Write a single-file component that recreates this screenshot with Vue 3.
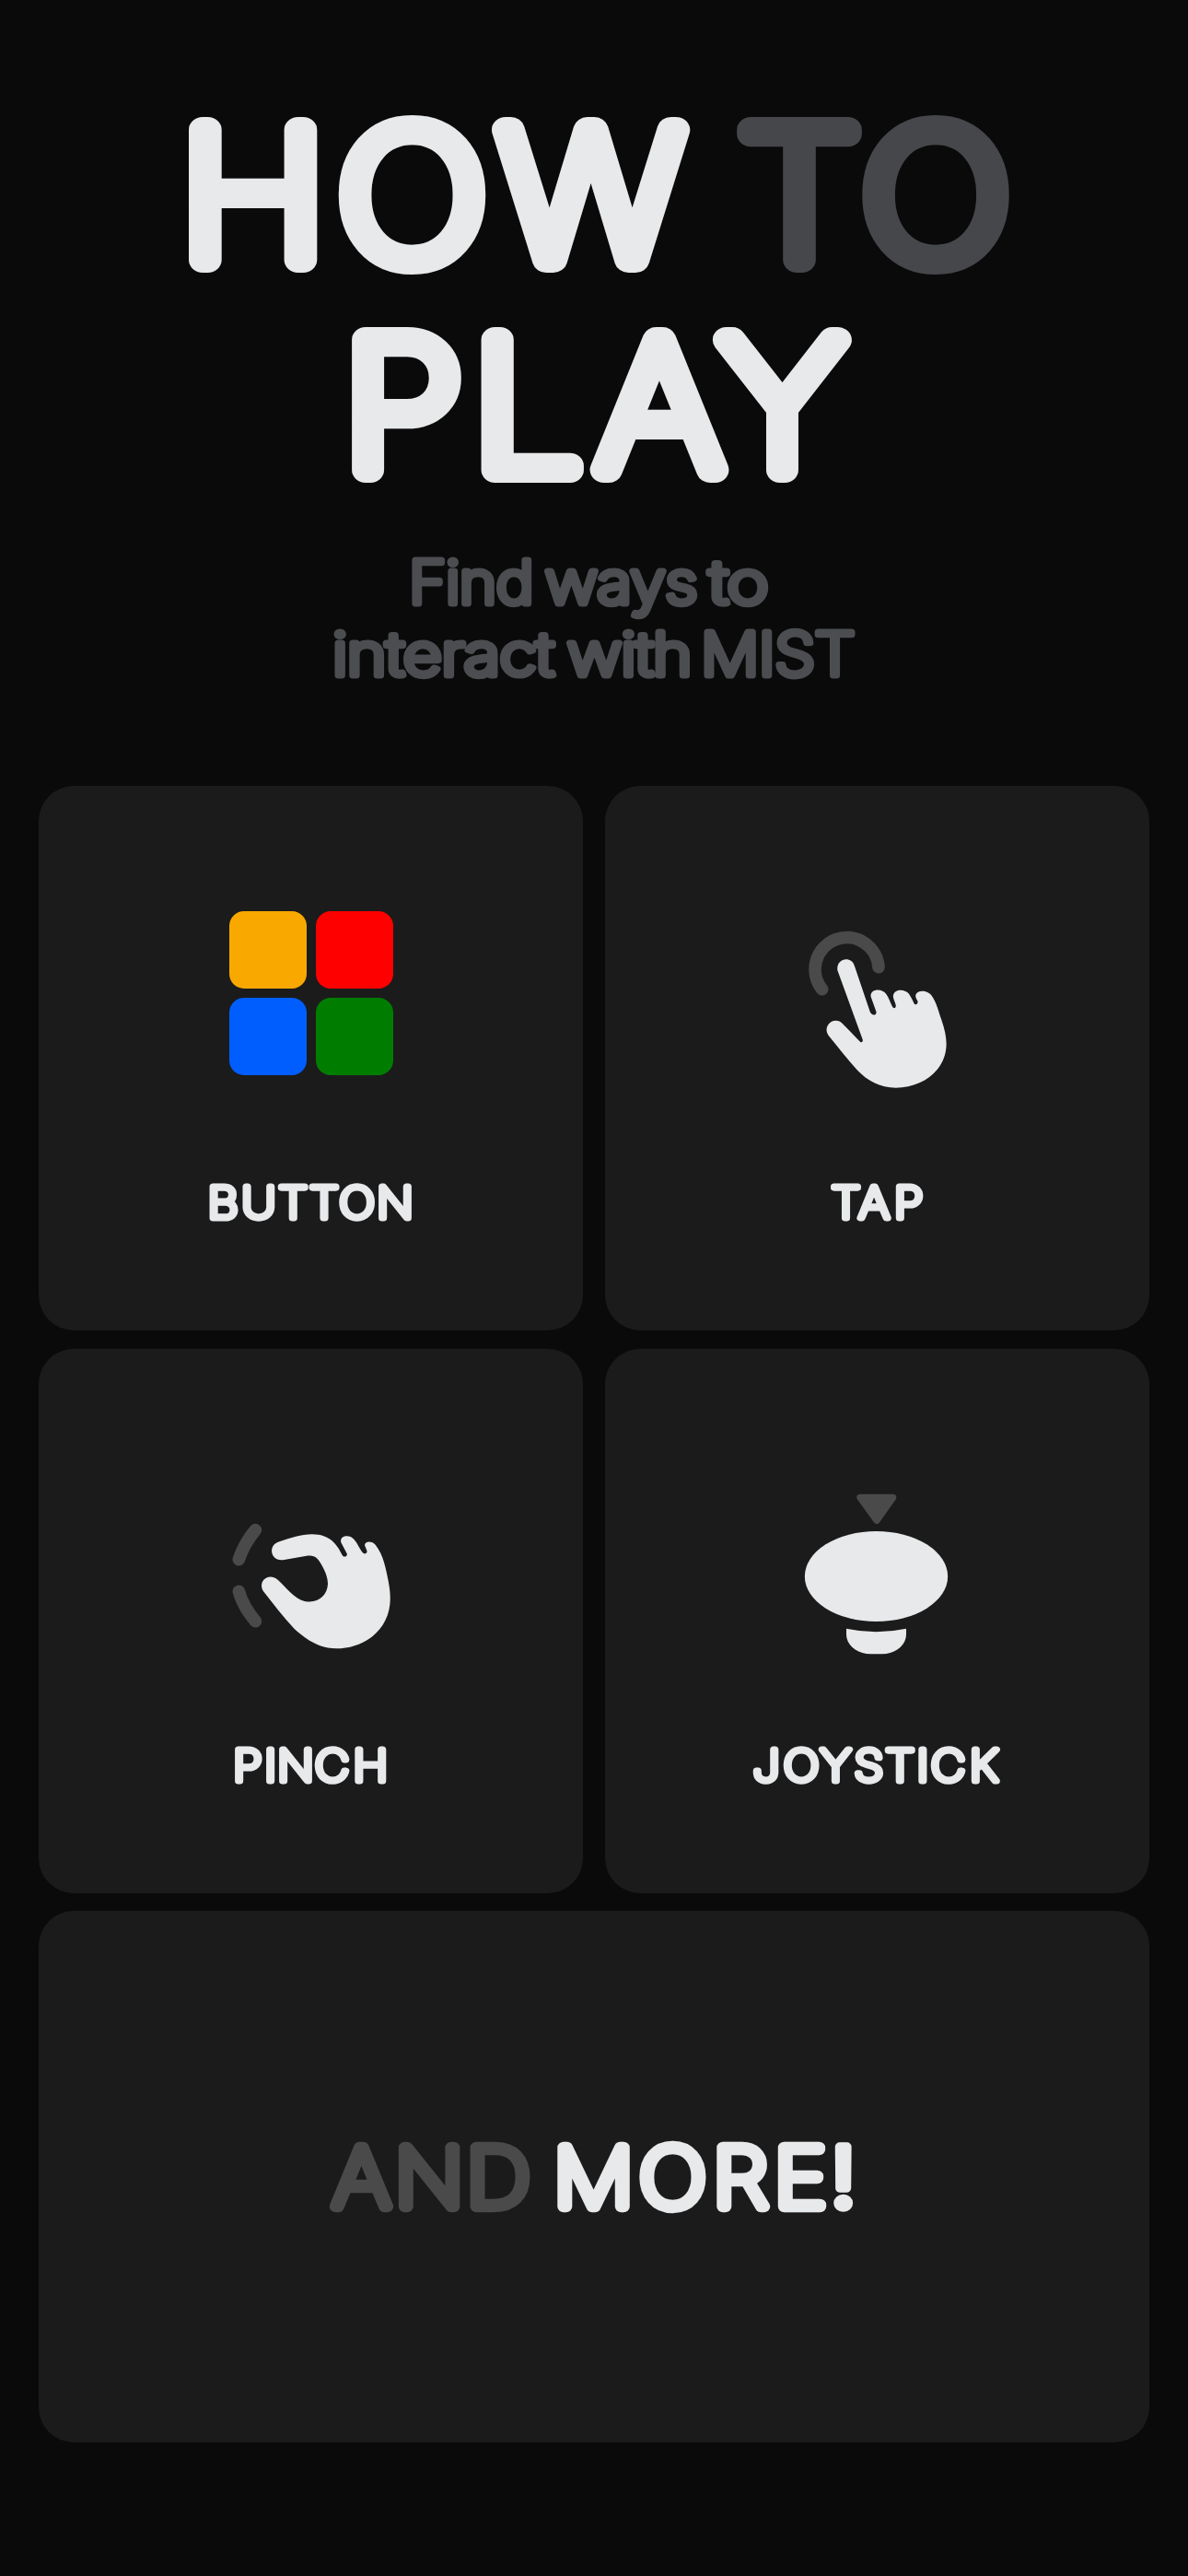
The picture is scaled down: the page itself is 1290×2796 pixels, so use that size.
<template>
  <main class="page">
    <h1 class="title">
      <svg width="1290" height="480" viewBox="0 60 1290 480">
        <text y="282.5" class="rounded" transform="scale(1.1 1)">
          <tspan :x="spread([274.5, 447.5, 641.5])">HOW</tspan>
          <tspan :x="spread([868, 1016])" class="muted">TO</tspan>
        </text>
        <text y="510.5" class="rounded" transform="scale(1.08 1)">
          <tspan :x="spread([437, 573, 716, 849.5], 1.08)">PLAY</tspan>
        </text>
      </svg>
    </h1>

    <p class="subtitle">
      <svg width="1290" height="180" viewBox="0 580 1290 180">
        <text y="654.5">
          <tspan x="444" textLength="135" lengthAdjust="spacingAndGlyphs">Find</tspan>
          <tspan x="592" textLength="165" lengthAdjust="spacingAndGlyphs">ways</tspan>
          <tspan x="770" textLength="64" lengthAdjust="spacingAndGlyphs">to</tspan>
        </text>
        <text y="732.5">
          <tspan x="361" textLength="240" lengthAdjust="spacingAndGlyphs">interact</tspan>
          <tspan x="616" textLength="135" lengthAdjust="spacingAndGlyphs">with</tspan>
          <tspan x="761" textLength="167" lengthAdjust="spacingAndGlyphs">MIST</tspan>
        </text>
      </svg>
    </p>

    <section class="cards">
      <article v-for="item in items" :key="item.name" class="card">
        <div v-if="item.name === 'BUTTON'" class="icon buttons">
          <span v-for="color in colors" :key="color" :class="['key', color]"></span>
        </div>

        <svg v-else-if="item.name === 'TAP'" class="icon" viewBox="-6 -2 630 630">
          <path class="trace" d="M128 252A103.5 103.5 0 1 1 312 180" />
          <path class="shape" d="M178 190C174 150 224 142 234 177L284 325C289 340 308 338 304 324L287 277C282 250 324 247 337 268C345 280 350 294 355 305C360 318 370 315 368 303C366 294 357 280 360 271C366 249 401 252 412 269C419 280 424 290 427 297C433 307 442 299 439 290C436 284 430 276 434 268C444 252 474 258 484 272C500 293 508 326 517 352C530 389 535 419 532 445C524 522 450 573 369 573C315 573 275 549 244 517C211 482 180 440 149 403C128 374 164 339 192 362C213 382 234 406 252 423C257 428 262 423 260 416Z" />
        </svg>

        <svg v-else-if="item.name === 'PINCH'" class="icon" viewBox="9 -91 630 630">
          <path class="trace" d="M142 91Q104 137 88 187M88 291Q101 339 142 388" />
          <path class="shape" d="M220 129C257 117 291 105 326 105C386 105 408 139 425 173C430 182 443 177 440 168L421 132C415 109 448 104 463 121C476 136 482 153 491 164C497 172 508 166 505 158L498 141C499 124 525 128 533 139C560 174 566 214 575 257C580 283 583 307 580 334C571 418 497 477 405 477C351 477 306 447 269 413C232 374 200 330 167 289C149 259 184 227 215 253C245 281 266 312 302 323C345 332 376 305 378 267C378 245 369 225 358 205C346 183 336 171 309 175L236 188C192 197 179 141 220 129Z" />
        </svg>

        <svg v-else class="icon" viewBox="-6 -2 630 630">
          <path class="arrow" d="M252 74H359L306 149Z" />
          <ellipse class="shape" cx="304.5" cy="331" rx="233" ry="147" />
          <path class="shape" d="M207 501Q304 522 402 501V520C402 557 364 584 324 584H286C245 584 207 557 207 520Z" />
        </svg>

        <svg class="label" width="591" height="60">
          <text y="47" :x="spread(item.x)" class="rounded" transform="scale(1.1 1)">{{ item.name }}</text>
        </svg>
      </article>

      <article class="card more">
        <svg width="1206" height="120" viewBox="42 2302 1206 120">
          <text y="2394" class="rounded" transform="scale(1.1 1)">
            <tspan :x="spread([392.5, 466, 541])" class="muted">AND</tspan>
            <tspan :x="spread([644.5, 730.5, 804, 869])">MORE</tspan>
            <tspan :x="spread([915.7])" class="mark">!</tspan>
          </text>
        </svg>
      </article>
    </section>
  </main>
</template>

<script setup>
const colors = ['orange', 'red', 'blue', 'green'];

// x holds the centre of every letter inside the card
const items = [
  { name: 'BUTTON', x: [200.2, 239, 276.2, 309.9, 345.5, 386.9] },
  { name: 'TAP', x: [261.4, 292.2, 329.5] },
  { name: 'PINCH', x: [226.7, 251.5, 279, 318.5, 360.2] },
  { name: 'JOYSTICK', x: [175, 213, 250.4, 286.4, 320.2, 344.8, 372.5, 411.3] },
];

// the lettering is widened by a scale, so the positions are divided by it
const spread = (centers, scale = 1.1) => centers.map((x) => (x / scale).toFixed(2)).join(' ');
</script>

<style>
body {
  margin: 0;
  background: #0a0a0a;
}
</style>

<style scoped>
.page {
  width: 1290px;
  height: 2796px;
  box-sizing: border-box;
  padding-top: 60px;
  background: #0a0a0a;
  font-family: Inter, Roboto, "Liberation Sans", sans-serif;
}

svg {
  display: block;
  overflow: visible;
}

/* thin letters with a thick round stroke give rounded terminals */
.rounded {
  font-weight: 100;
  text-anchor: middle;
  fill: #e7e9ea;
  stroke: #e7e9ea;
  stroke-linejoin: round;
}

.title {
  margin: 0;
}

.title .rounded {
  font-size: 194px;
  stroke-width: 28px;
}

.title .muted {
  fill: #46474b;
  stroke: #46474b;
}

.subtitle {
  margin: 40px 0 0;
}

.subtitle text {
  font-size: 64.5px;
  font-weight: 200;
  letter-spacing: -0.5px;
  fill: #4b4d50;
  stroke: #4b4d50;
  stroke-width: 7.2px;
  stroke-linejoin: round;
}

.cards {
  display: grid;
  grid-template-columns: 591px 591px;
  grid-template-rows: 591px 591px 577px;
  gap: 19.5px 24px;
  padding: 93px 42px 0;
}

.card {
  display: flex;
  flex-direction: column;
  align-items: center;
  border-radius: 38px;
  background: #1b1b1b;
}

.icon {
  width: 210px;
  height: 210px;
  margin-top: 136px;
}

.buttons {
  display: grid;
  grid-template-columns: 84px 84px;
  grid-template-rows: 84px 84px;
  justify-content: center;
  gap: 10px;
}

.key {
  border-radius: 16px;
}

.orange {
  background: #f9a800;
}

.red {
  background: #ff0000;
}

.blue {
  background: #005eff;
}

.green {
  background: #007d00;
}

.shape {
  fill: #e7e9ea;
}

.trace {
  fill: none;
  stroke: #4a4a4a;
  stroke-width: 41;
  stroke-linecap: round;
}

.arrow {
  fill: #4a4a4a;
  stroke: #4a4a4a;
  stroke-width: 22;
  stroke-linejoin: round;
}

.label {
  margin-top: 76px;
}

.label .rounded {
  font-size: 46.5px;
  stroke-width: 7.2px;
}

.more {
  grid-column: 1 / 3;
  justify-content: center;
}

.more .rounded {
  font-size: 88px;
  stroke-width: 12.5px;
}

.more .muted {
  fill: #4a4a4a;
  stroke: #4a4a4a;
}

.more .mark {
  font-size: 90px;
  font-weight: 300;
  stroke-width: 9.5px;
}
</style>
